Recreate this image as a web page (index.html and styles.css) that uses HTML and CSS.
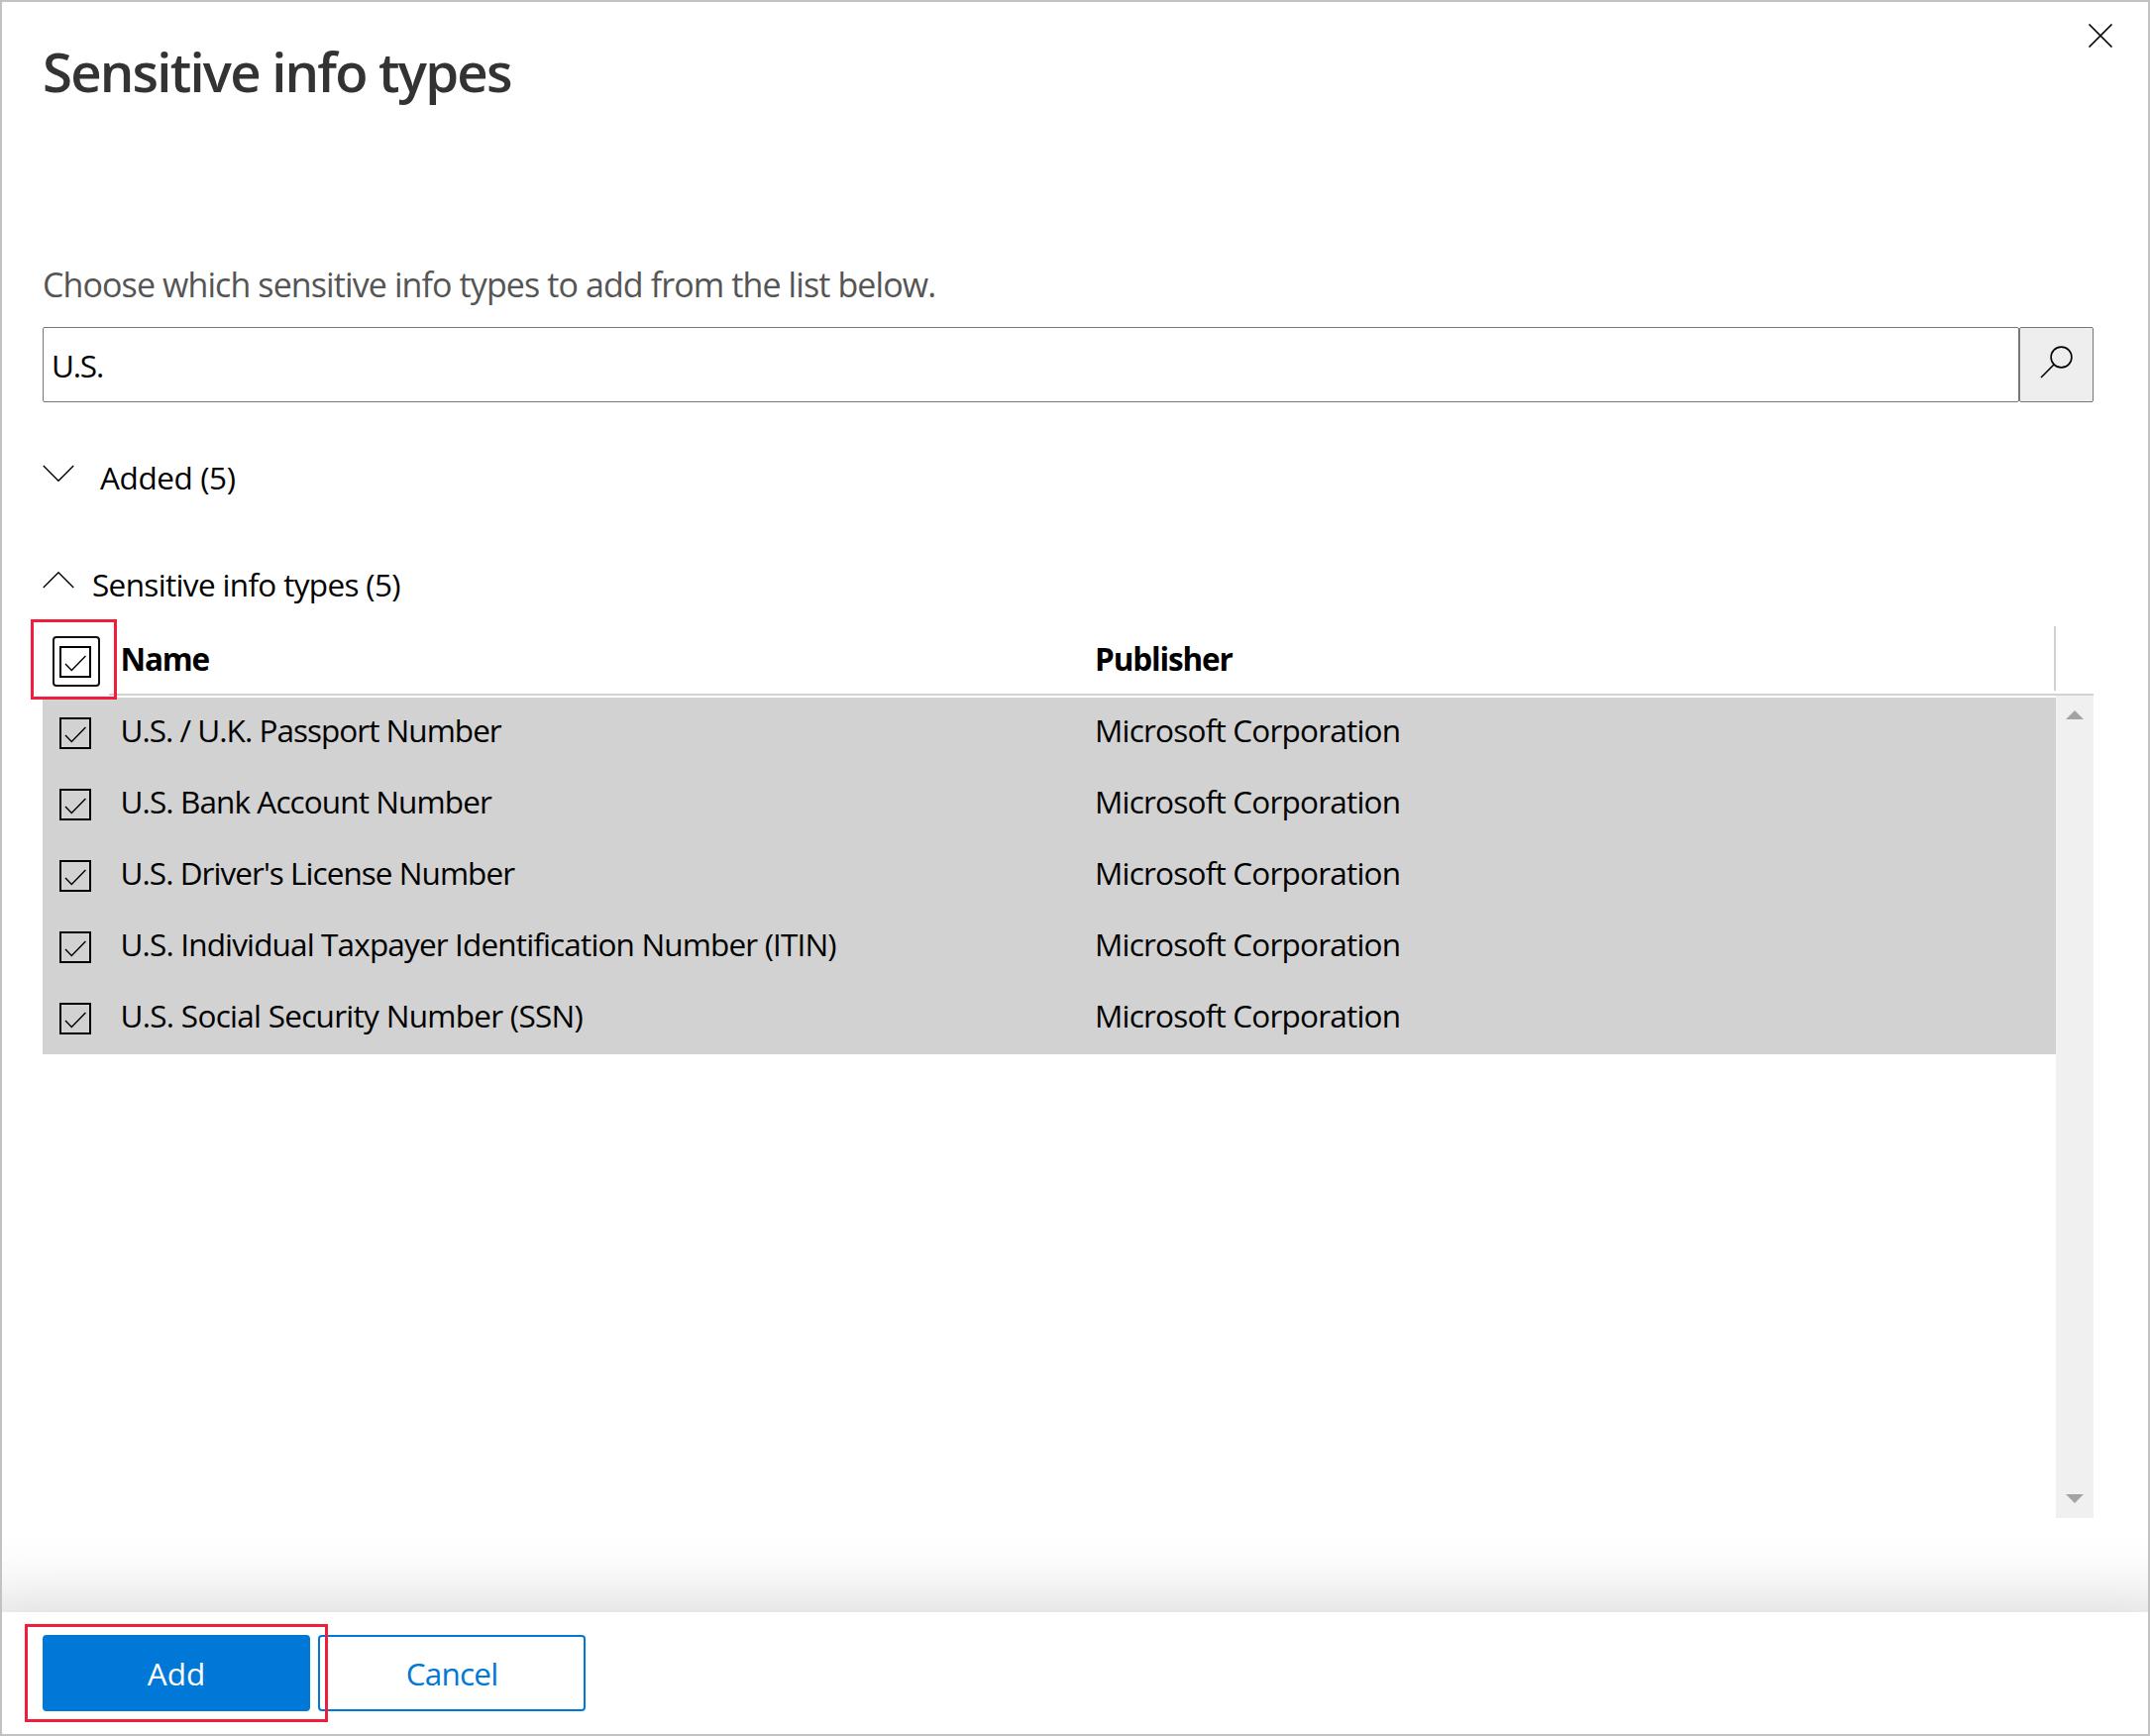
FILE: index.html
```html
<!DOCTYPE html>
<html lang="en">
<head>
<meta charset="utf-8">
<title>Sensitive info types</title>
<link rel="stylesheet" href="styles.css">
</head>
<body>
<svg class="defs" aria-hidden="true">
  <symbol id="check" viewBox="0 0 32 32"><path d="M6 18 12.3 24.4 26.4 10" fill="none" stroke="#000" stroke-width="1.4"/></symbol>
</svg>
<div class="panel">
  <button class="close" aria-label="Close"><svg width="26" height="26" viewBox="0 0 26 26"><path d="M1.5 1.5 24.5 24.5M24.5 1.5 1.5 24.5" stroke="#000" stroke-width="1.7"/></svg></button>
  <main class="content">
    <h1 class="title"><span>Sensitive info types</span></h1>
    <p class="intro"><span>Choose which sensitive info types to add from the list below.</span></p>
    <div class="search">
      <div class="search-input"><span>U.S.</span></div>
      <button class="search-button" aria-label="Search"><svg width="36" height="36" viewBox="0 0 36 36"><circle cx="22.5" cy="13.5" r="10.4" fill="none" stroke="#000" stroke-width="1.6"/><path d="M15.2 20.8 2 34" stroke="#000" stroke-width="1.6"/></svg></button>
    </div>
    <div class="group group-added">
      <svg width="32" height="18" viewBox="0 0 32 18"><path d="M.8 1 16 16.2 31.2 1" fill="none" stroke="#000" stroke-width="1.4"/></svg>
      <span class="label-added">Added (5)</span>
    </div>
    <div class="group group-types">
      <svg width="32" height="18" viewBox="0 0 32 18"><path d="M.8 17 16 1.8 31.2 17" fill="none" stroke="#000" stroke-width="1.4"/></svg>
      <span class="label-types">Sensitive info types (5)</span>
    </div>
    <section class="grid">
      <div class="grid-head">
        <div class="check-cell"><span class="box focused"><svg><use href="#check"/></svg></span><span class="callout callout-check"></span></div>
        <div class="cell name"><span class="name-head">Name</span></div>
        <div class="cell publisher"><span class="publisher-head">Publisher</span></div>
      </div>
      <div class="grid-body">
        <div class="rows">
          <div class="row"><div class="check-cell"><span class="box"><svg><use href="#check"/></svg></span></div><div class="cell name"><span class="r1">U.S. / U.K. Passport Number</span></div><div class="cell publisher"><span>Microsoft Corporation</span></div></div>
          <div class="row"><div class="check-cell"><span class="box"><svg><use href="#check"/></svg></span></div><div class="cell name"><span class="r2">U.S. Bank Account Number</span></div><div class="cell publisher"><span>Microsoft Corporation</span></div></div>
          <div class="row"><div class="check-cell"><span class="box"><svg><use href="#check"/></svg></span></div><div class="cell name"><span class="r3">U.S. Driver's License Number</span></div><div class="cell publisher"><span>Microsoft Corporation</span></div></div>
          <div class="row"><div class="check-cell"><span class="box"><svg><use href="#check"/></svg></span></div><div class="cell name"><span class="r4">U.S. Individual Taxpayer Identification Number (ITIN)</span></div><div class="cell publisher"><span>Microsoft Corporation</span></div></div>
          <div class="row"><div class="check-cell"><span class="box"><svg><use href="#check"/></svg></span></div><div class="cell name"><span class="r5">U.S. Social Security Number (SSN)</span></div><div class="cell publisher"><span>Microsoft Corporation</span></div></div>
        </div>
        <div class="scrollbar">
          <svg width="18" height="9" viewBox="0 0 18 9"><path d="M0 9 9 0 18 9Z" fill="#a3a3a3"/></svg>
          <svg width="18" height="9" viewBox="0 0 18 9"><path d="M0 0 9 9 18 0Z" fill="#a3a3a3"/></svg>
        </div>
      </div>
    </section>
  </main>
  <footer class="footer">
    <button class="button primary"><span>Add</span></button>
    <button class="button secondary"><span>Cancel</span></button>
    <span class="callout callout-add"></span>
  </footer>
</div>
</body>
</html>
```
FILE: styles.css
```css
* { box-sizing: border-box; }
body { margin: 0; background: #fff; }
button { margin: 0; padding: 0; border: 0; background: none; font: inherit; }
svg { display: block; flex: none; }
.defs { display: none; }

.panel {
  position: relative;
  display: flex;
  flex-direction: column;
  width: 2170px;
  height: 1752px;
  border: 2px solid #c2c2c2;
  background: #fff;
  color: #000;
  font-family: "Open Sans", "Noto Sans", sans-serif;
  font-size: 31.5px;
  line-height: 44px;
  white-space: nowrap;
  overflow: hidden;
}
.close { position: absolute; top: 21px; right: 35px; }

.content { flex: 1; padding: 33px 55px 0 41px; }
.title { margin: 0; font-size: 54.5px; line-height: 74px; font-weight: 600; letter-spacing: -1.8px; color: #333; }
.intro { margin: 156px 0 0; font-size: 34px; letter-spacing: -.9px; color: #555; }

.search { display: flex; height: 76px; margin-top: 21px; }
.search-input {
  display: flex;
  align-items: center;
  flex: 1;
  padding: 2px 0 0 8px;
  border: 1px solid #767676;
  border-radius: 2px;
  letter-spacing: -1.2px;
}
.search-button {
  display: flex;
  justify-content: center;
  width: 75px;
  padding-top: 16px;
  border: 1px solid #767676;
  border-radius: 2px;
  background: #eee;
}

.group { display: flex; height: 44px; }
.group-added { margin-top: 54px; gap: 26px; letter-spacing: -.4px; }
.group-added svg { margin-top: 9px; }
.group-types { margin-top: 64px; gap: 18px; letter-spacing: -.66px; }
.group-types svg { margin-top: 8px; }

.grid { margin-top: 18px; }
.grid-head {
  display: flex;
  height: 72px;
  padding-bottom: 3px;
  background: linear-gradient(#d2d2d2, #d2d2d2) 67px 100% / 100% 2px no-repeat;
  font-weight: 700;
  letter-spacing: -1.15px;
}
.check-cell { position: relative; display: flex; width: 78.5px; padding: 20px 0 0 17px; }
.grid-head .check-cell { padding-top: 22px; }
.cell { display: flex; padding-top: 11px; }
.grid-head .cell { padding-top: 13px; }
.name { width: 983.5px; }
.grid-head .publisher { flex: 1; margin: 2px 38px 2px 0; padding-top: 11px; border-right: 2px solid #d2d2d2; }
.r1 { letter-spacing: -.98px; }
.r2 { letter-spacing: -.9px; }
.r3 { letter-spacing: -.96px; }
.r4 { letter-spacing: -.85px; }
.r5 { letter-spacing: -.72px; }
.row .publisher { letter-spacing: -.79px; }

.box { position: relative; display: block; width: 32px; height: 32px; border: 2px solid #000; }
.box svg { width: 32px; height: 32px; margin: -2px; }
.focused::after {
  content: "";
  position: absolute;
  inset: -12px -11px -11px -9px;
  border: 2px solid #111;
  border-radius: 4px;
}

.grid-body { display: flex; height: 830px; }
.rows { flex: 1; padding-top: 2px; }
.row { display: flex; height: 72px; background: #d2d2d2; }
.scrollbar {
  display: flex;
  flex-direction: column;
  justify-content: space-between;
  align-items: center;
  width: 38px;
  padding: 15px 0;
  background: #f0f0f0;
}

.footer {
  position: relative;
  display: flex;
  gap: 8px;
  height: 123px;
  margin: 0 -40px;
  padding: 23px 81px;
  background: #fff;
  box-shadow: 0 0 80px rgba(0, 0, 0, .2);
}
.button { display: flex; align-items: center; justify-content: center; width: 270px; height: 77px; border: 2px solid #0078d7; border-radius: 4px; }
.primary { background: #0078d7; color: #fff; }
.secondary { background: #fff; color: #0078d7; letter-spacing: -.8px; }

.callout { position: absolute; border: 3px solid #f01d3b; pointer-events: none; }
.callout-check { left: -12px; top: -5px; width: 87px; height: 81px; }
.callout-add { left: 63px; top: 12px; width: 306px; height: 99px; }
```
